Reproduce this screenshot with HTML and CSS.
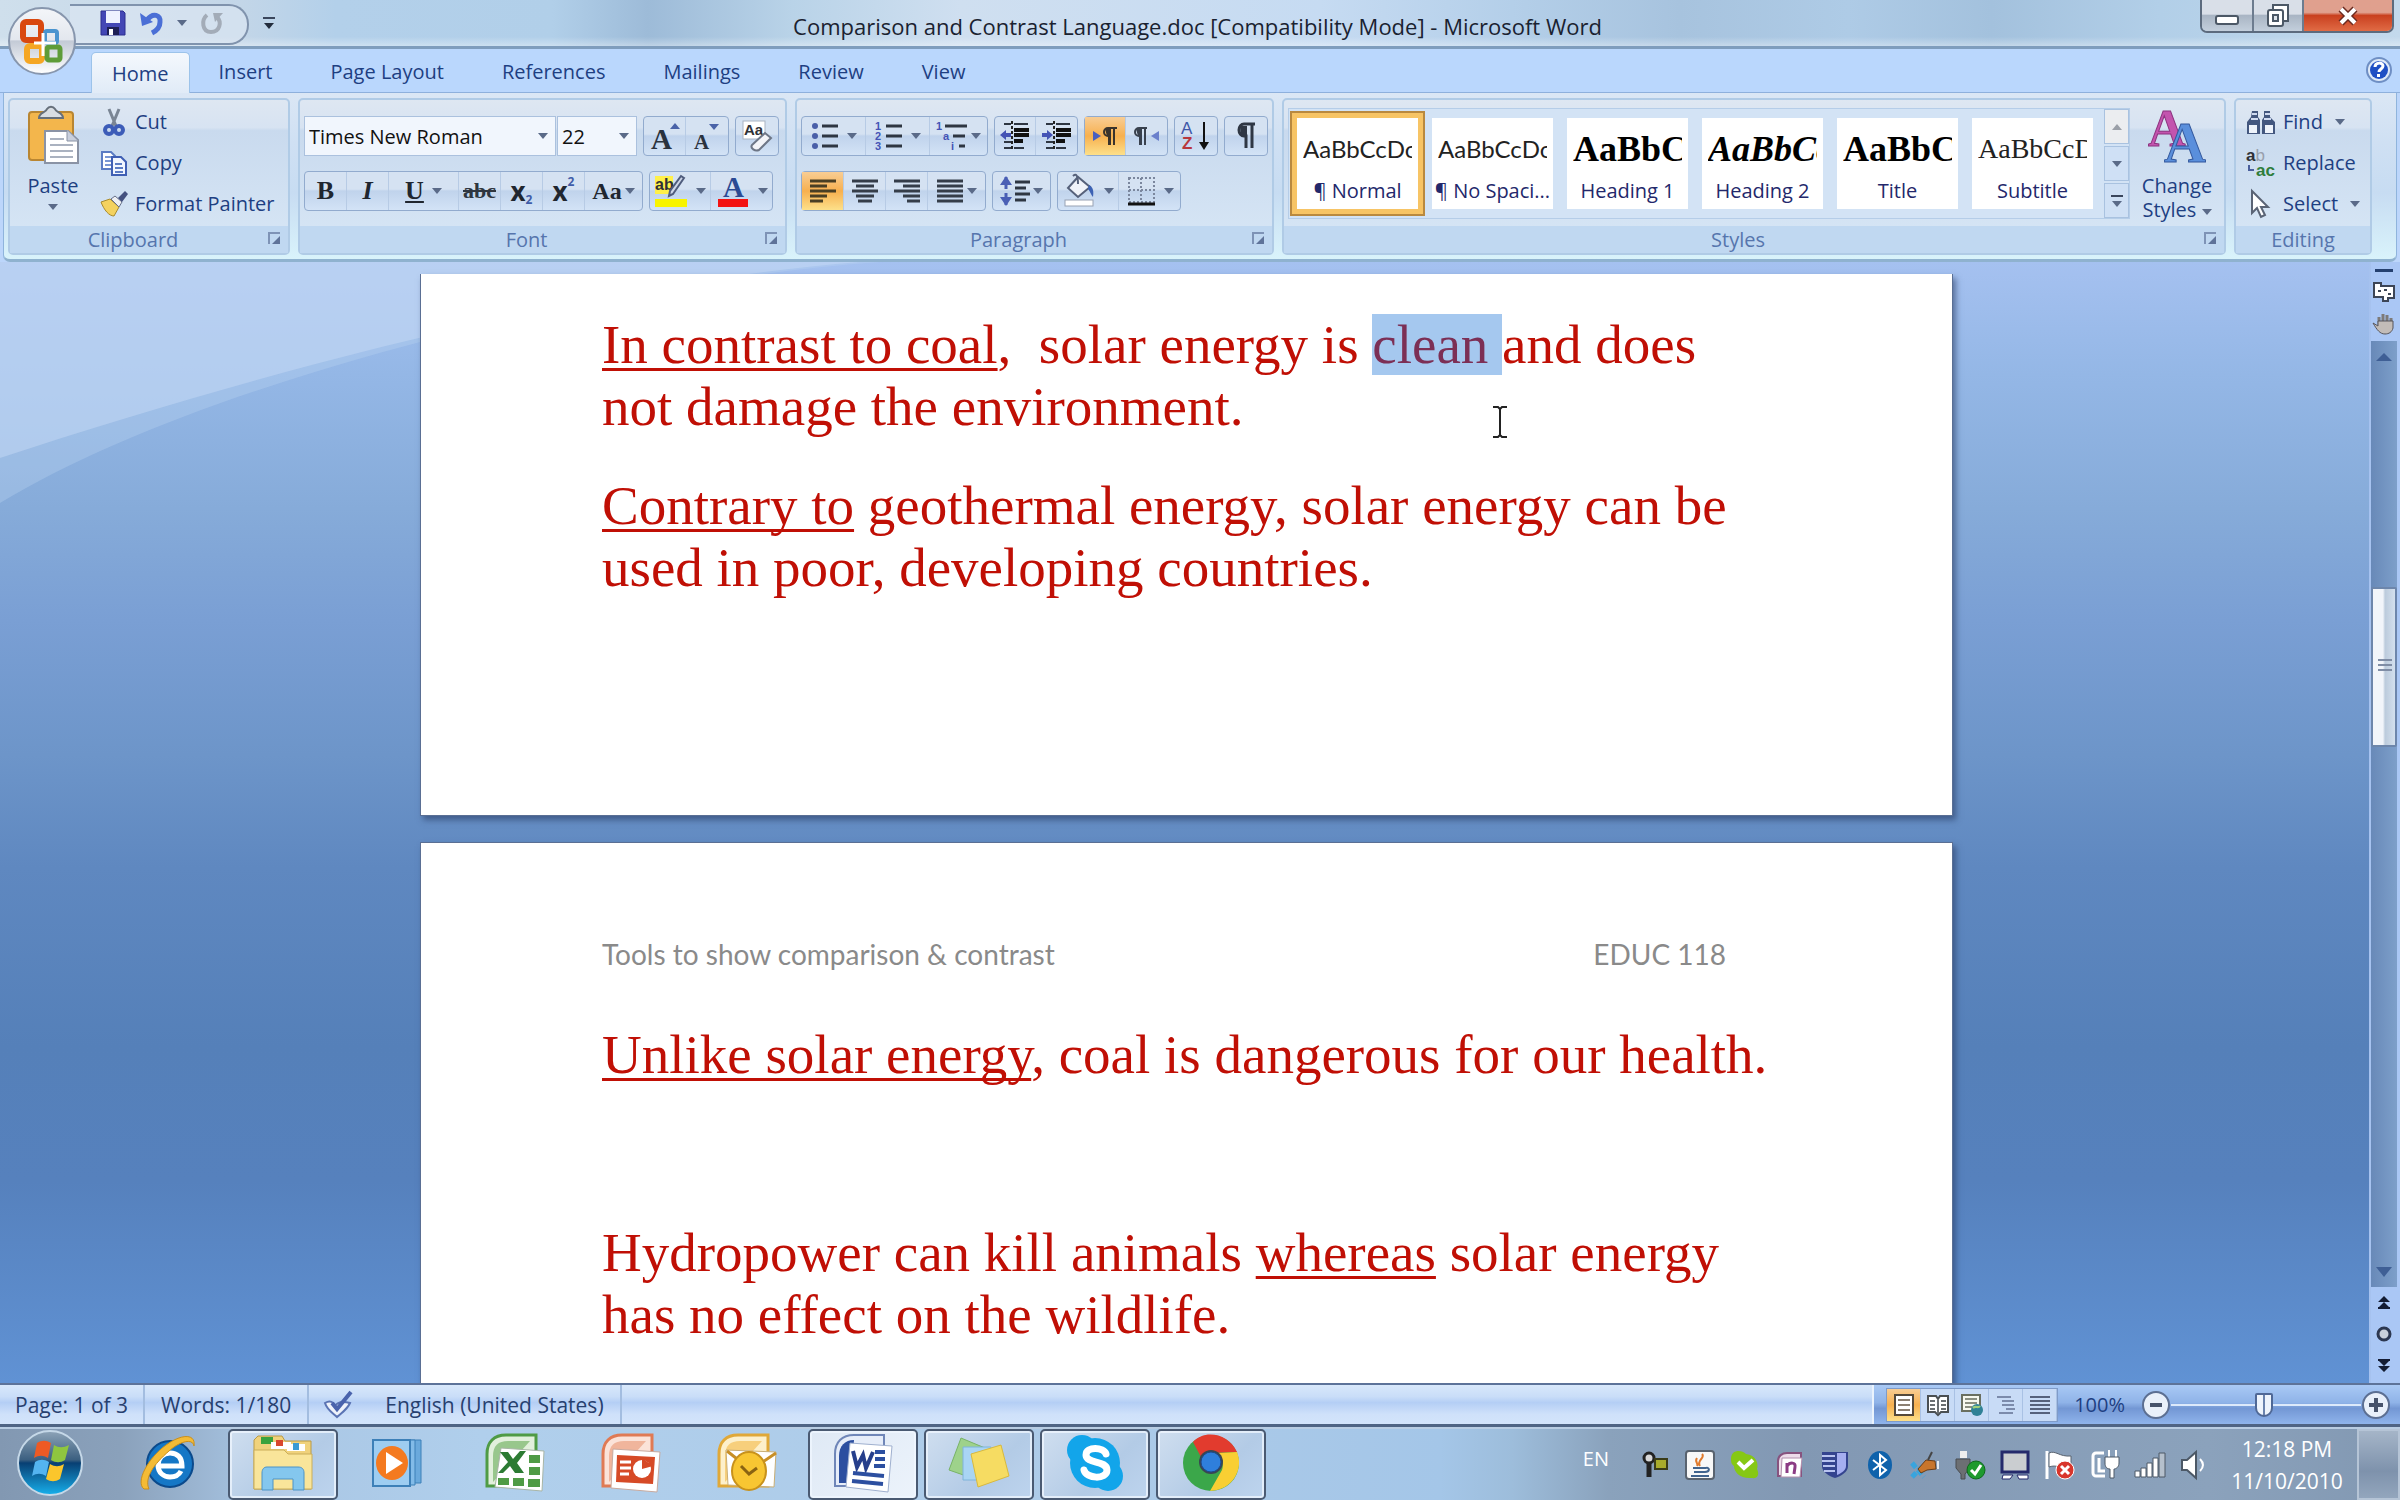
FILE: index.html
```
<!DOCTYPE html>
<html lang="en">
<head>
  <meta charset="UTF-8">
  <meta name="viewport" content="width=device-width, initial-scale=1.0">
  <title>Comparison and Contrast Language.doc [Compatibility Mode] - Microsoft Word</title>
  <link rel="stylesheet" href="styles.css">
</head>
<body>

  <!-- Title bar -->
  <header class="titlebar">
    <button class="office-btn" aria-label="Office Button">
      <svg width="70" height="70" viewBox="0 0 70 70">
        <defs>
          <linearGradient id="orb" x1="0" y1="0" x2="0" y2="1">
            <stop offset="0" stop-color="#f4f6f9"/><stop offset=".48" stop-color="#e3e7ee"/>
            <stop offset=".5" stop-color="#c3cad6"/><stop offset="1" stop-color="#ffffff"/>
          </linearGradient>
        </defs>
        <circle cx="35" cy="35" r="33" fill="url(#orb)" stroke="#8796ad" stroke-width="2"/>
        <g fill="none">
          <rect x="16" y="16" width="18" height="18" rx="3" stroke="#d9480f" stroke-width="6"/>
          <rect x="38" y="25" width="12" height="12" rx="2" stroke="#4a94cf" stroke-width="4"/>
          <rect x="20" y="40" width="15" height="15" rx="3" stroke="#f5a623" stroke-width="6"/>
          <rect x="40" y="41" width="13" height="13" rx="2" stroke="#5e9c38" stroke-width="5"/>
        </g>
        <path d="M27 37h22M36 27v23" stroke="#fff" stroke-width="3"/>
      </svg>
    </button>
    <div class="quick-access">
      <button aria-label="Save">
        <svg width="28" height="28" viewBox="0 0 28 28"><path d="M2 2h22l2 2v22H2z" fill="#4347b5" stroke="#2c2f8f"/><path d="M7 2h14v12H7z" fill="#eef2ff"/><path d="M8 18h12v8H8z" fill="#1d1f55"/><path d="M10 20h4v6h-4z" fill="#fff"/></svg>
      </button>
      <button aria-label="Undo">
        <svg width="26" height="26" viewBox="0 0 26 26"><path d="M8 10C14 2 22 5 21 12c0 6-4 9-8 11" fill="none" stroke="#4b6fd6" stroke-width="5"/><path d="M1 3l2 13 11-4z" fill="#4b6fd6"/></svg>
      </button>
      <span class="caret"></span>
      <button aria-label="Redo">
        <svg width="26" height="26" viewBox="0 0 26 26"><path d="M8 5C2 10 3 22 12 22s11-10 6-15" fill="none" stroke="#a3acb8" stroke-width="4"/><path d="M14 3h10l-8 9z" fill="#a3acb8"/></svg>
      </button>
    </div>
    <button class="customize-btn" aria-label="Customize Quick Access Toolbar"><span class="bar"></span><span class="caret dark"></span></button>
    <h1 class="window-title">Comparison and Contrast Language.doc [Compatibility Mode] - Microsoft Word</h1>
    <div class="window-buttons">
      <button class="minimize" aria-label="Minimize"><svg width="26" height="12" viewBox="0 0 26 12"><rect x="2" y="2" width="22" height="8" rx="2" fill="#fff" stroke="#4c5866" stroke-width="2"/></svg></button>
      <button class="restore" aria-label="Restore Down"><svg width="26" height="26" viewBox="0 0 26 26"><path d="M8 6V2h15v16h-4" fill="#fff" stroke="#4c5866" stroke-width="2"/><rect x="3" y="7" width="15" height="16" rx="2" fill="#fff" stroke="#4c5866" stroke-width="2"/><rect x="8" y="12" width="5" height="6" fill="#dde3ea" stroke="#4c5866" stroke-width="2"/></svg></button>
      <button class="close" aria-label="Close"><svg width="22" height="20" viewBox="0 0 22 20"><path d="M4 3l14 14M18 3L4 17" stroke="#6b2a20" stroke-width="7"/><path d="M4 3l14 14M18 3L4 17" stroke="#fff" stroke-width="4"/></svg></button>
    </div>
  </header>

  <!-- Ribbon tabs -->
  <nav class="tabs">
    <button class="tab active">Home</button>
    <button class="tab">Insert</button>
    <button class="tab">Page Layout</button>
    <button class="tab">References</button>
    <button class="tab">Mailings</button>
    <button class="tab">Review</button>
    <button class="tab">View</button>
    <button class="help-btn" aria-label="Help"><svg width="28" height="28" viewBox="0 0 28 28"><circle cx="14" cy="14" r="12" fill="#dfeaf8" stroke="#6f8fc4" stroke-width="2"/><circle cx="14" cy="14" r="9" fill="#1f4fc4"/><path d="M10 11c0-5 8-5 8-1 0 3-4 3-4 6" fill="none" stroke="#fff" stroke-width="3"/><rect x="12" y="18" width="3" height="3" fill="#fff"/></svg></button>
  </nav>

  <!-- Ribbon -->
  <div class="ribbon">
    <section class="group clipboard">
      <div class="group-body">
        <button class="big-btn paste">
          <svg width="52" height="58" viewBox="0 0 52 58"><rect x="2" y="6" width="44" height="48" rx="3" fill="#f3b64c" stroke="#b98632" stroke-width="2"/><path d="M12 12c0-6 7-5 8-9 2-3 6-3 8 0 1 4 8 3 8 9z" fill="#d8dde3" stroke="#666f7a" stroke-width="2"/><path d="M18 25h23l10 9v23H18z" fill="#fff" stroke="#8a93a5" stroke-width="2"/><path d="M40 24v11h11" fill="#c8cfdd" stroke="#8a93a5"/><path d="M23 33h14M23 39h23M23 45h23M23 51h23" stroke="#aab2c0" stroke-width="2"/></svg>
          <span>Paste</span>
          <span class="caret"></span>
        </button>
        <div class="stack">
          <button><svg width="28" height="28" viewBox="0 0 28 28"><path d="M9 1l7 17M19 1l-7 17" stroke="#7a8594" stroke-width="3"/><circle cx="9" cy="22" r="4" fill="none" stroke="#3c5cb8" stroke-width="4"/><circle cx="19" cy="22" r="4" fill="none" stroke="#3c5cb8" stroke-width="4"/></svg>Cut</button>
          <button><svg width="28" height="28" viewBox="0 0 28 28"><path d="M2 3h9l4 4v13H2z" fill="#fff" stroke="#5b7cc4" stroke-width="2"/><path d="M5 8h6M5 12h6M5 16h6" stroke="#7a97d4" stroke-width="2"/><path d="M12 8h9l5 5v13H12z" fill="#f2f6ff" stroke="#3f5fb4" stroke-width="2"/><path d="M15 15h7M15 19h8M15 23h8" stroke="#5b7cc4" stroke-width="2"/></svg>Copy</button>
          <button><svg width="28" height="28" viewBox="0 0 28 28"><path d="M1 12l9-3 9 8-5 9c-5 0-10-6-13-14z" fill="#f4d25f" stroke="#a88a2c"/><path d="M11 9l4-3 7 6-3 5z" fill="#eef0f4" stroke="#67708a"/><path d="M18 8l7-7 3 3-6 8z" fill="#44517f"/></svg>Format Painter</button>
        </div>
      </div>
      <footer class="caption">Clipboard<i class="launcher"></i></footer>
    </section>

    <section class="group font">
      <div class="group-body rows">
        <div class="row">
          <div class="combos">
            <label class="combo"><select class="font-name" aria-label="Font"><option>Times New Roman</option></select><span class="caret"></span></label>
            <label class="combo"><select class="font-size" aria-label="Font Size"><option>22</option></select><span class="caret"></span></label>
          </div>
          <div class="tools">
            <button class="w42" aria-label="Grow Font"><svg width="32" height="30" viewBox="0 0 32 30"><text x="2" y="28" class="glyph-serif" font-size="29">A</text><path d="M21 8l5-6 5 6z" fill="#4a63a8"/></svg></button>
            <button class="w42" aria-label="Shrink Font"><svg width="32" height="30" viewBox="0 0 32 30"><text x="3" y="28" class="glyph-serif" font-size="21">A</text><path d="M18 3h10l-5 6z" fill="#4a63a8"/></svg></button>
          </div>
          <div class="tools">
            <button class="w42" aria-label="Clear Formatting"><svg width="34" height="34" viewBox="0 0 34 34"><rect x="3" y="2" width="22" height="18" fill="#fff" stroke="#a9b3c2"/><text x="4" y="16" class="glyph-sans" font-size="15">Aa</text><path d="M12 26l13-12 6 5-12 12c-4 2-9-2-7-5z" fill="#f3f4f8" stroke="#6d7686" stroke-width="2"/></svg></button>
          </div>
        </div>
        <div class="row">
          <div class="tools">
            <button class="w42 bold">B</button>
            <button class="w42 italic">I</button>
            <button class="w70 underline"><u>U</u><span class="caret"></span></button>
            <button class="w42 strike"><s>abc</s></button>
            <button class="w42 script">x<sub>2</sub></button>
            <button class="w42 script">x<sup>2</sup></button>
            <button class="w56 case">Aa<span class="caret"></span></button>
          </div>
          <div class="tools">
            <button class="w60" aria-label="Text Highlight Color"><svg width="34" height="34" viewBox="0 0 34 34"><rect x="1" y="2" width="18" height="18" fill="#fff04a"/><text x="1" y="16" class="glyph-sans" font-size="16">ab</text><path d="M30 4l-11 16-4 2 1-5L27 2z" fill="#cdd6e8" stroke="#4f5c7c" stroke-width="2"/><rect x="1" y="25" width="32" height="8" fill="#f8f400"/></svg><span class="caret"></span></button>
            <button class="w60" aria-label="Font Color"><svg width="34" height="34" viewBox="0 0 34 34"><text x="7" y="23" font-family="Liberation Serif" font-weight="bold" font-size="29" fill="#2b4a93">A</text><rect x="2" y="25" width="30" height="8" fill="#f31212"/></svg><span class="caret"></span></button>
          </div>
        </div>
      </div>
      <footer class="caption">Font<i class="launcher"></i></footer>
    </section>

    <section class="group paragraph">
      <div class="group-body rows">
        <div class="row">
          <div class="tools">
            <button class="w62" aria-label="Bullets"><svg width="28" height="28" viewBox="0 0 28 28"><g fill="#4a5fa8"><circle cx="4" cy="4" r="3"/><circle cx="4" cy="14" r="3"/><circle cx="4" cy="24" r="3"/></g><path d="M11 4h16M11 14h16M11 24h16" stroke="#2e3642" stroke-width="3"/></svg><span class="caret"></span></button>
            <button class="w62" aria-label="Numbering"><svg width="28" height="30" viewBox="0 0 28 30"><g font-family="Liberation Sans" font-size="11" font-weight="bold" fill="#4453b5"><text x="0" y="9">1</text><text x="0" y="19">2</text><text x="0" y="29">3</text></g><path d="M11 5h16M11 15h16M11 25h16" stroke="#2e3642" stroke-width="3"/></svg><span class="caret"></span></button>
            <button class="w56" aria-label="Multilevel List"><svg width="32" height="30" viewBox="0 0 32 30"><g font-family="Liberation Sans" font-size="11" font-weight="bold" fill="#4453b5"><text x="0" y="9">1</text><text x="7" y="19">a</text><text x="15" y="29">i</text></g><path d="M9 5h22M17 15h12M23 25h6" stroke="#2e3642" stroke-width="3"/></svg><span class="caret"></span></button>
          </div>
          <div class="tools">
            <button class="w40" aria-label="Decrease Indent"><svg width="30" height="30" viewBox="0 0 30 30"><path d="M4 3h7M4 21h7M4 27h7M14 3h14M14 27h10" stroke="#2e3642" stroke-width="2"/><path d="M14 9h15M14 14h15M14 20h9" stroke="#111" stroke-width="4"/><path d="M12 0v30" stroke="#222" stroke-dasharray="3 2" stroke-width="2"/><path d="M0 14l6-5v3h5v4H6v3z" fill="#4453b5"/></svg></button>
            <button class="w40" aria-label="Increase Indent"><svg width="30" height="30" viewBox="0 0 30 30"><path d="M4 3h7M4 21h7M4 27h7M14 3h14M14 27h10" stroke="#2e3642" stroke-width="2"/><path d="M14 9h15M14 14h15M14 20h9" stroke="#111" stroke-width="4"/><path d="M12 0v30" stroke="#222" stroke-dasharray="3 2" stroke-width="2"/><path d="M11 14L5 9v3H0v4h5v3z" fill="#4453b5"/></svg></button>
          </div>
          <div class="tools">
            <button class="w40 on" aria-label="Left-to-Right"><svg width="26" height="22" viewBox="0 0 26 22"><path d="M1 6l8 5-8 5z" fill="#4a5fc0"/><path d="M25 3H16a4 4 0 0 0 0 8h1v9M22 3v17M18 3v17" fill="none" stroke="#3a332c" stroke-width="2"/><path d="M13 4h6v7h-4z" fill="#3a332c"/></svg></button>
            <button class="w40" aria-label="Right-to-Left"><svg width="26" height="22" viewBox="0 0 26 22"><path d="M25 6l-8 5 8 5z" fill="#6b80cc"/><path d="M13 3H5a4 4 0 0 0 0 8h1v9M11 3v17M7 3v17" fill="none" stroke="#39414e" stroke-width="2"/><path d="M2 4h6v7H4z" fill="#39414e"/></svg></button>
          </div>
          <div class="tools">
            <button class="w42" aria-label="Sort"><svg width="30" height="32" viewBox="0 0 30 32"><text x="0" y="14" font-family="Liberation Sans" font-size="17" fill="#3f57a8">A</text><text x="1" y="29" font-family="Liberation Sans" font-size="17" font-weight="bold" fill="#b8383d">Z</text><path d="M23 2v22" stroke="#111" stroke-width="2"/><path d="M18 22h10l-5 8z" fill="#111"/></svg></button>
          </div>
          <div class="tools">
            <button class="w42" aria-label="Show/Hide"><svg width="22" height="28" viewBox="0 0 22 28"><path d="M20 2H9a5 6 0 0 0 0 12h2v12M17 2v24" fill="none" stroke="#2f3744" stroke-width="3"/><path d="M5 4h7v10H6z" fill="#2f3744"/></svg></button>
          </div>
        </div>
        <div class="row">
          <div class="tools">
            <button class="w42 on" aria-label="Align Left"><svg width="28" height="26" viewBox="0 0 28 26"><path d="M1 3h26M1 8h17M1 13h26M1 18h17M1 23h13" stroke="#4a3f24" stroke-width="3"/></svg></button>
            <button class="w42" aria-label="Center"><svg width="28" height="26" viewBox="0 0 28 26"><path d="M1 3h26M5 8h18M1 13h26M5 18h18M7 23h14" stroke="#353d49" stroke-width="3"/></svg></button>
            <button class="w42" aria-label="Align Right"><svg width="28" height="26" viewBox="0 0 28 26"><path d="M1 3h26M10 8h17M1 13h26M10 18h17M14 23h13" stroke="#353d49" stroke-width="3"/></svg></button>
            <button class="w56" aria-label="Justify"><svg width="28" height="26" viewBox="0 0 28 26"><path d="M1 3h26M1 8h26M1 13h26M1 18h26M1 23h26" stroke="#353d49" stroke-width="3"/></svg><span class="caret"></span></button>
          </div>
          <div class="tools">
            <button class="w56" aria-label="Line Spacing"><svg width="30" height="32" viewBox="0 0 30 32"><path d="M6 2v28" stroke="#4a5fb5" stroke-width="3" stroke-dasharray="12 4"/><path d="M0 10l6-9 6 9zM0 22l6 9 6-9z" fill="#4a5fb5"/><path d="M15 7h15M15 13h11M15 19h15M15 25h11" stroke="#2e3642" stroke-width="3"/></svg><span class="caret"></span></button>
          </div>
          <div class="tools">
            <button class="w60" aria-label="Shading"><svg width="34" height="34" viewBox="0 0 34 34"><path d="M6 14L16 3l12 10-12 10z" fill="#f0f3f9" stroke="#56617a" stroke-width="2"/><path d="M11 2c3-3 5-1 5 8" fill="none" stroke="#56617a" stroke-width="2"/><path d="M27 11c4 2 5 6 4 12-2-2-3-6-5-8z" fill="#3c62b4"/><rect x="3" y="26" width="28" height="6" fill="#fff" stroke="#98a2b3"/></svg><span class="caret"></span></button>
            <button class="w60" aria-label="Borders"><svg width="30" height="32" viewBox="0 0 30 32"><path d="M3 3h25v24H3zM15 3v24M3 15h25" fill="none" stroke="#7b879e" stroke-width="2" stroke-dasharray="2 2"/><path d="M2 29h27" stroke="#111" stroke-width="3"/></svg><span class="caret"></span></button>
          </div>
        </div>
      </div>
      <footer class="caption">Paragraph<i class="launcher"></i></footer>
    </section>

    <section class="group styles">
      <div class="group-body">
        <div class="gallery">
          <div class="cards">
            <button class="card selected"><span class="sample">AaBbCcDc</span><span class="name">¶ Normal</span></button>
            <button class="card"><span class="sample">AaBbCcDc</span><span class="name">¶ No Spaci...</span></button>
            <button class="card"><span class="sample heading">AaBbC</span><span class="name">Heading 1</span></button>
            <button class="card"><span class="sample heading slanted">AaBbCc</span><span class="name">Heading 2</span></button>
            <button class="card"><span class="sample heading">AaBbC</span><span class="name">Title</span></button>
            <button class="card"><span class="sample subtitle">AaBbCcD</span><span class="name">Subtitle</span></button>
          </div>
          <div class="gallery-scroll">
            <button class="off" aria-label="Row up"><span class="caret up"></span></button>
            <button aria-label="Row down"><span class="caret"></span></button>
            <button aria-label="More"><span class="bar"></span><span class="caret"></span></button>
          </div>
        </div>
        <button class="big-btn change-styles">
          <svg width="58" height="56" viewBox="0 0 58 56"><text x="0" y="38" font-family="Liberation Serif" font-weight="bold" font-size="52" fill="#c354ae" stroke="#8d3480">A</text><text x="16" y="54" font-family="Liberation Serif" font-weight="bold" font-size="58" fill="#5a8fdc" stroke="#34599e">A</text></svg>
          <span>Change</span>
          <span>Styles <span class="caret"></span></span>
        </button>
      </div>
      <footer class="caption">Styles<i class="launcher"></i></footer>
    </section>

    <section class="group editing">
      <div class="group-body">
        <div class="stack">
          <button><svg width="30" height="28" viewBox="0 0 30 28"><path d="M6 3h6v6l2 3v14H1V14l4-5zM18 3h6v6l5 5v12H16V12l2-3z" fill="#43577f"/><path d="M3 17h8v8H3zM19 17h8v8h-8z" fill="#eef3fb"/><path d="M6 6h5M19 6h5M5 11h7M18 11h7" stroke="#cfdaf0" stroke-width="2"/></svg>Find <span class="caret"></span></button>
          <button><svg width="30" height="28" viewBox="0 0 30 28"><text x="0" y="12" class="glyph-sans" font-size="17">a<tspan font-weight="normal" fill="#98a0ad">b</tspan></text><path d="M3 16v5h5" fill="none" stroke="#4a5f9c" stroke-width="2"/><text x="10" y="27" font-family="Liberation Sans" font-weight="bold" font-size="17" fill="#2f7d3c">ac</text></svg>Replace</button>
          <button><svg width="30" height="28" viewBox="0 0 30 28"><path d="M6 1v22l5-5 4 9 4-2-4-8h7z" fill="#fff" stroke="#5a6475" stroke-width="2"/></svg>Select <span class="caret"></span></button>
        </div>
      </div>
      <footer class="caption">Editing</footer>
    </section>
  </div>

  <!-- Document area -->
  <main class="workspace">
    <svg class="swoosh" width="900" height="250" viewBox="0 0 900 250">
      <path d="M0 0h880C600 20 200 120 0 241z" fill="#b9d3f2" opacity=".35"/>
      <path d="M0 0h860C600 20 260 110 0 196z" fill="#c5daf5" opacity=".5"/>
    </svg>
    <div class="pages">
      <article class="page first">
        <p><u>In contrast to coal</u>,&nbsp; solar energy is <mark>clean </mark>and does<br>not damage the environment.</p>
        <p><u>Contrary to</u> geothermal energy, solar energy can be<br>used in poor, developing countries.</p>
        <svg class="ibeam" width="16" height="32" viewBox="0 0 16 32"><path d="M1 1h5l2 2 2-2h5M8 3v26M1 31h5l2-2 2 2h5" fill="none" stroke="#222" stroke-width="2"/></svg>
      </article>
      <article class="page">
        <div class="page-header"><span>Tools to show comparison &amp; contrast</span><span>EDUC 118</span></div>
        <p><u>Unlike solar energy</u>, coal is dangerous for our health.</p>
        <p>&nbsp;</p>
        <p>Hydropower can kill animals <u>whereas</u> solar energy<br>has no effect on the wildlife.</p>
      </article>
    </div>
    <aside class="scrollbar">
      <span class="split"></span>
      <button class="ruler" aria-label="View Ruler"><svg width="24" height="22" viewBox="0 0 24 22"><path d="M2 2h7v3h13v12h-6v3h-5v-4H2z" fill="#fff" stroke="#3c4556" stroke-width="2"/><path d="M6 10h3M12 9h3M16 13h3" stroke="#3c4556" stroke-width="2"/></svg></button>
      <button class="hand" aria-label="Pan"><svg width="24" height="24" viewBox="0 0 24 24"><path d="M7 13V5M11 12V2M15 12V3M19 13V6" stroke="#7d7a78" stroke-width="3"/><path d="M1 11l5 3V9h15v7c-1 4-4 6-8 6-5 0-8-4-12-11z" fill="#c2bcb8" stroke="#55555c"/></svg></button>
      <div class="track">
        <span class="caret up wide"></span>
        <div class="thumb"></div>
        <span class="caret wide"></span>
      </div>
      <button class="browse" aria-label="Previous Page"><svg width="14" height="14" viewBox="0 0 14 14"><path d="M7 0l6 6H1zM7 6l6 6H1z" fill="#131c33"/><path d="M1 12h12" stroke="#131c33" stroke-width="2"/></svg></button>
      <button class="browse" aria-label="Select Browse Object"><svg width="16" height="16" viewBox="0 0 16 16"><circle cx="8" cy="8" r="6" fill="#c9d0da" stroke="#2c3750" stroke-width="3"/></svg></button>
      <button class="browse" aria-label="Next Page"><svg width="14" height="14" viewBox="0 0 14 14"><path d="M7 14L1 8h12zM7 8L1 2h12z" fill="#131c33"/><path d="M1 2h12" stroke="#131c33" stroke-width="2"/></svg></button>
    </aside>
  </main>

  <!-- Status bar -->
  <div class="statusbar">
    <button class="status-item">Page: 1 of 3</button>
    <button class="status-item">Words: 1/180</button>
    <button class="status-item proof" aria-label="Proofing"><svg width="32" height="30" viewBox="0 0 32 30"><path d="M2 13c5-3 9-1 10 3 3-5 8-5 15-3-3 7-9 10-13 14-4-4-10-7-12-14z" fill="#eef2fa" stroke="#5b74b4" stroke-width="2"/><path d="M9 13l5 6L28 2" fill="none" stroke="#4a63ac" stroke-width="4"/></svg></button>
    <button class="status-item language">English (United States)</button>
    <div class="status-right">
      <div class="views">
        <button class="on" aria-label="Print Layout"><svg width="24" height="24" viewBox="0 0 24 24"><rect x="3" y="2" width="18" height="20" fill="#fff" stroke="#55493a" stroke-width="2"/><path d="M6 7h12M6 12h12M6 17h12" stroke="#8b7f72" stroke-width="2"/></svg></button>
        <button aria-label="Full Screen Reading"><svg width="24" height="24" viewBox="0 0 24 24"><path d="M2 3h8l2 3 2-3h8v16h-7l-3 3-3-3H2z" fill="#fff" stroke="#4a4f52" stroke-width="2"/><path d="M12 6v14M4 8h5M4 12h5M4 16h5M15 8h5M15 12h5M15 16h5" stroke="#6a6f72" stroke-width="2"/></svg></button>
        <button aria-label="Web Layout"><svg width="24" height="24" viewBox="0 0 24 24"><rect x="2" y="2" width="18" height="16" fill="#f7f8ee" stroke="#6a6f60" stroke-width="2"/><path d="M5 6h12M5 10h12M5 14h7" stroke="#8b8f80" stroke-width="2"/><circle cx="17" cy="17" r="6" fill="#2f8196"/><path d="M13 15c3-3 5 1 7-2" stroke="#9fd07c" stroke-width="2" fill="none"/></svg></button>
        <button aria-label="Outline"><svg width="24" height="24" viewBox="0 0 24 24"><path d="M3 4h14M8 8h12M8 12h12M12 16h9M5 20h14" stroke="#7c8bab" stroke-width="2"/></svg></button>
        <button aria-label="Draft"><svg width="24" height="24" viewBox="0 0 24 24"><path d="M2 4h20M2 8h20M2 12h20M2 16h20M2 20h20" stroke="#56627c" stroke-width="2"/></svg></button>
      </div>
      <button class="zoom-level">100%</button>
      <button class="zoom-btn" aria-label="Zoom Out"><svg width="30" height="30" viewBox="0 0 30 30"><circle cx="15" cy="15" r="13" fill="#e9f0fa" stroke="#5c6f92" stroke-width="2"/><path d="M9 15h12" stroke="#47536b" stroke-width="4"/></svg></button>
      <input class="zoom-slider" type="range" min="0" max="100" value="49" aria-label="Zoom">
      <button class="zoom-btn" aria-label="Zoom In"><svg width="30" height="30" viewBox="0 0 30 30"><circle cx="15" cy="15" r="13" fill="#e9f0fa" stroke="#5c6f92" stroke-width="2"/><path d="M8 15h14M15 8v14" stroke="#47536b" stroke-width="4"/></svg></button>
    </div>
  </div>

  <!-- Windows taskbar -->
  <footer class="taskbar">
    <button class="start" aria-label="Start">
      <svg width="70" height="68" viewBox="0 0 70 68">
        <defs>
          <linearGradient id="start" x1="0" y1="0" x2="0" y2="1"><stop offset="0" stop-color="#8ea4b8"/><stop offset=".45" stop-color="#3b5f80"/><stop offset=".5" stop-color="#083f73"/><stop offset="1" stop-color="#17b0ec"/></linearGradient>
        </defs>
        <circle cx="35" cy="34" r="32" fill="url(#start)" stroke="#c5d8e8" stroke-width="2"/>
        <path d="M22 14c5-3 9-3 14 0l-3 15c-5-3-9-3-14 0z" fill="#ee5a24"/>
        <path d="M39 16c5 3 9 3 15 0l-4 15c-5 3-9 3-14 0z" fill="#8fc63f"/>
        <path d="M20 33c5-3 9-3 14 0l-3 14c-5-3-9-3-14 0z" fill="#54b4f0"/>
        <path d="M35 35c5 3 9 3 14 0l-4 15c-5 3-9 3-14 0z" fill="#fbc62c"/>
      </svg>
    </button>
    <div class="apps">
      <button class="app" aria-label="Internet Explorer"><svg width="62" height="62" viewBox="0 0 62 62"><circle cx="34" cy="32" r="23" fill="#1577c6" stroke="#0b4a8c" stroke-width="2"/><path d="M22 34h24c0-9-5-13-12-13s-12 5-12 12c0 8 6 12 12 12 6 0 9-2 11-6" fill="none" stroke="#fff" stroke-width="5"/><path d="M8 57C-1 50 12 26 30 13 45 2 60 1 58 14c-1-8-14-5-25 5C18 32 8 46 13 57z" fill="#f4bb35" stroke="#c98f1c"/></svg></button>
      <button class="app open" aria-label="Windows Explorer"><svg width="64" height="62" viewBox="0 0 64 62"><path d="M3 8l4-4h24l3 5h26v48H3z" fill="#f0d27c" stroke="#b99a46"/><path d="M10 5h12v7H10z" fill="#3aa23d"/><path d="M20 10h20v7H20z" fill="#fff"/><path d="M25 8h7v6h-7z" fill="#d9472e"/><path d="M36 12h18v7H36z" fill="#fff"/><path d="M42 11h6v7h-6z" fill="#3b9bd3"/><path d="M3 18h30l4 4h24v35H3z" fill="#f9e59a" stroke="#cbae58"/><path d="M11 58V41c0-4 2-6 5-6h31c4 0 6 2 6 6v17H42V47H22v11z" fill="#84c7ee" stroke="#4d93c6"/></svg></button>
      <button class="app" aria-label="Windows Media Player"><svg width="56" height="56" viewBox="0 0 56 56"><path d="M14 5h36v43H14z" fill="#6aa9dc" stroke="#3d80b8"/><path d="M8 5h36v45H8z" fill="#82bbe8" stroke="#3d80b8"/><path d="M2 5h37v46H2z" fill="#9ecdf1" stroke="#3d80b8" stroke-width="2"/><ellipse cx="21" cy="28" rx="16" ry="17" fill="#f47a20"/><path d="M15 17l17 11-17 11z" fill="#fff"/></svg></button>
      <button class="app" aria-label="Excel"><svg width="62" height="62" viewBox="0 0 62 62"><path d="M3 54V22C3 10 10 3 22 3h30v51z" fill="#e2f0dc" stroke="#4f9b45" stroke-width="3"/><path d="M9 50V24C9 14 14 9 24 9h22z" fill="#98c78c"/><path d="M17 16l43 3-2 40-47-4z" fill="#fff" stroke="#a8b5a6"/><path d="M16 20h8l5 7 7-8h6L33 31l7 10h-9l-5-7-7 7h-5l10-11z" fill="#2c7b33"/><path d="M45 23h11v8H45zM45 35h11v8H45zM14 46h11v7H14zM29 46h11v8H29zM44 47h12v8H44z" fill="#4f9b45"/></svg></button>
      <button class="app" aria-label="PowerPoint"><svg width="62" height="62" viewBox="0 0 62 62"><path d="M3 54V22C3 10 10 3 22 3h30v51z" fill="#fbe3d9" stroke="#e07a54" stroke-width="3"/><path d="M9 50V24C9 14 14 9 24 9h22z" fill="#f0b59c"/><path d="M13 17l47 3-3 40-46-4z" fill="#fff" stroke="#c8aa9f"/><path d="M17 23l38 2-2 27-37-2z" fill="#d64a26"/><path d="M20 30h11M20 36h11M20 42h9" stroke="#fff" stroke-width="3"/><circle cx="42" cy="37" r="9" fill="#fff"/><path d="M42 37V26l11 8z" fill="#d64a26"/></svg></button>
      <button class="app" aria-label="Outlook"><svg width="62" height="62" viewBox="0 0 62 62"><path d="M3 54V22C3 10 10 3 22 3h30v51z" fill="#fdf0cb" stroke="#e0a838" stroke-width="3"/><path d="M9 50V24C9 14 14 9 24 9h22z" fill="#f7cf7c"/><path d="M10 18l50 2-2 35-46-2z" fill="#fff" stroke="#c9ae75"/><path d="M11 19l24 19 25-17" fill="none" stroke="#c88f26" stroke-width="3"/><ellipse cx="33" cy="39" rx="17" ry="19" fill="#f8c632" stroke="#c8921c" stroke-width="2"/><path d="M25 34l8 8 8-6" fill="none" stroke="#8a6312" stroke-width="3"/></svg></button>
      <button class="app open current" aria-label="Word"><svg width="62" height="62" viewBox="0 0 62 62"><path d="M3 54V22C3 10 10 3 22 3h30v51z" fill="#e6edf9" stroke="#6f86b8" stroke-width="2"/><path d="M7 51V24C7 14 13 8 22 8l-4 43z" fill="#2c4fa0"/><path d="M18 11l42 3-4 46-42-5z" fill="#fff" stroke="#9fb0cf"/><path d="M21 19l4 16 6-12 3 13 7-16" fill="none" stroke="#263f8c" stroke-width="4"/><path d="M43 20h10M43 27h10M42 34h11M21 41l31 3M20 49l31 3" stroke="#2c4fa0" stroke-width="4"/></svg></button>
      <button class="app open" aria-label="Sticky Notes"><svg width="64" height="56" viewBox="0 0 64 56"><path d="M14 3l24 10-13 30L2 35z" fill="#9ed28b" stroke="#78b367"/><path d="M16 12h28v33H16z" fill="#a9d5f4" stroke="#7fb4da"/><path d="M24 19l30-9 8 31-31 11z" fill="#f6dc62" stroke="#d8b93e"/></svg></button>
      <button class="app open" aria-label="Skype"><svg width="62" height="62" viewBox="0 0 62 62"><circle cx="18" cy="18" r="15" fill="#12a5ea"/><circle cx="44" cy="44" r="15" fill="#12a5ea"/><circle cx="31" cy="31" r="25" fill="#12a5ea"/><path d="M42 22c-2-7-20-8-20 1 0 9 21 5 21 15 0 10-21 9-23 0" fill="none" stroke="#fff" stroke-width="7" stroke-linecap="round"/></svg></button>
      <button class="app open" aria-label="Chrome"><svg width="62" height="62" viewBox="0 0 62 62"><circle cx="31" cy="31" r="28" fill="#3ba74a"/><path d="M13 10C24-3 49 1 57 20l-26 1c-4 0-8 3-9 6z" fill="#e23b2e"/><path d="M57 20c7 17-4 38-27 39l12-21c2-5 0-13-4-17z" fill="#f9cf33"/><circle cx="31" cy="30" r="12" fill="#3a4652"/><circle cx="31" cy="30" r="10" fill="#2f7fdc" stroke="#1d4a8c"/></svg></button>
    </div>
    <div class="tray">
      <span class="lang">EN</span>
      <ul class="tray-icons">
        <li><svg width="28" height="30" viewBox="0 0 28 30"><circle cx="8" cy="8" r="5" fill="#d8d8d8" stroke="#222" stroke-width="3"/><path d="M8 14v13" stroke="#222" stroke-width="5"/><rect x="14" y="9" width="12" height="10" fill="#a8ac2c" stroke="#3a3c18" stroke-width="2"/></svg></li>
        <li><svg width="30" height="30" viewBox="0 0 30 30"><rect x="1" y="1" width="28" height="28" rx="3" fill="#f8f8f8" stroke="#59636f" stroke-width="2"/><path d="M17 4c4 4-6 6-2 12M12 8c-3 4 2 5 0 8" stroke="#e07a2c" stroke-width="2" fill="none"/><path d="M8 18h13M9 22h11M6 26h18M21 18c4-1 4 4-1 4" stroke="#41648e" stroke-width="2" fill="none"/></svg></li>
        <li><svg width="30" height="30" viewBox="0 0 30 30"><path d="M1 8C2-1 12 0 16 4c10 1 13 10 11 15 3 6 0 10-5 9C10 29 4 22 4 16 1 14 1 11 1 8z" fill="#86c814"/><path d="M8 12l6 6 9-8" fill="none" stroke="#fff" stroke-width="4"/></svg></li>
        <li><svg width="28" height="28" viewBox="0 0 28 28"><path d="M2 25V10C2 5 6 2 11 2h14v23z" fill="#eddcea" stroke="#87537f" stroke-width="2"/><path d="M6 7h20l-2 19H5z" fill="#fff" stroke="#b390ae"/><path d="M11 22V12M11 15c3-4 9-4 8 1l-1 7" fill="none" stroke="#8c3c85" stroke-width="3"/></svg></li>
        <li><svg width="30" height="30" viewBox="0 0 30 30"><path d="M2 2h26v14c0 6-7 10-13 12C9 26 2 22 2 16z" fill="#34448f"/><path d="M17 3h9v13c0 4-4 7-9 9z" fill="#a5aef0"/><path d="M2 6h13M2 11h13M3 16h12M4 21h11" stroke="#b9c4f0" stroke-width="2"/></svg></li>
        <li><svg width="26" height="30" viewBox="0 0 26 30"><ellipse cx="13" cy="15" rx="12" ry="14" fill="#0f62ab"/><path d="M6 10l13 10-6 5V5l6 5L6 20" fill="none" stroke="#fff" stroke-width="2"/></svg></li>
        <li><svg width="30" height="28" viewBox="0 0 30 28"><path d="M2 12l12 14M2 26l13-13" stroke="#39a4dd" stroke-width="5" stroke-dasharray="6 3"/><path d="M8 18l8-9 9 1 1 8-9 1-6 3z" fill="#c8752b" stroke="#6b3d16"/><path d="M18 9l4-8" stroke="#444" stroke-width="2"/><path d="M28 10v8" stroke="#e3e8ee" stroke-width="2"/></svg></li>
        <li><svg width="32" height="30" viewBox="0 0 32 30"><path d="M6 1h7v7H6z" fill="#eee"/><path d="M2 9h14v9l-5 6v5H7v-5l-5-6z" fill="#6c6f73" stroke="#494c50"/><circle cx="22" cy="20" r="9" fill="#1e9a2e" stroke="#0d6a1a"/><path d="M17 20l4 4 6-9" fill="none" stroke="#fff" stroke-width="3"/></svg></li>
        <li><svg width="30" height="30" viewBox="0 0 30 30"><rect x="2" y="2" width="26" height="20" fill="#cacdd0" stroke="#252a6b" stroke-width="3"/><path d="M3 25h10l-3 4H2zM17 25h11v4h-9z" fill="#fff" stroke="#252a6b"/></svg></li>
        <li><svg width="32" height="32" viewBox="0 0 32 32"><path d="M3 2v28" stroke="#fff" stroke-width="3"/><path d="M5 4c7-3 10 4 22 3v13c-10 0-14-5-22-2z" fill="#fff" stroke="#59636f"/><circle cx="21" cy="21" r="9" fill="#d8362c" stroke="#fff"/><path d="M17 17l8 8M25 17l-8 8" stroke="#fff" stroke-width="3"/></svg></li>
        <li><svg width="30" height="32" viewBox="0 0 30 32"><path d="M14 4H6a3 3 0 0 0-3 3v17a3 3 0 0 0 3 3h9M9 9v13h6" fill="none" stroke="#fff" stroke-width="3"/><path d="M19 1v7M26 1v7" stroke="#fff" stroke-width="2"/><path d="M15 8h14v6c0 4-3 6-5 6v9h-4v-9c-3 0-5-2-5-6z" fill="#fff" stroke="#4c5866"/></svg></li>
        <li><svg width="32" height="28" viewBox="0 0 32 28"><g fill="#fff" stroke="#4c5866"><path d="M1 20h5v6H1zM7 17h5v9H7zM13 12h5v14h-5zM19 7h5v19h-5z"/><path d="M25 2h6v24h-6z" fill="#b5c0cc"/></g></svg></li>
        <li><svg width="30" height="30" viewBox="0 0 30 30"><path d="M2 10h5l9-8v26l-9-8H2z" fill="#fff" stroke="#4c5866" stroke-width="2"/><path d="M20 9c4 4 4 8 0 12" fill="none" stroke="#fff" stroke-width="2"/></svg></li>
      </ul>
      <time class="clock"><span>12:18 PM</span><span>11/10/2010</span></time>
      <button class="show-desktop" aria-label="Show desktop"></button>
    </div>
  </footer>

</body>
</html>
```
FILE: styles.css
```
* {
  box-sizing: border-box;
}

body {
  margin: 0;
  height: 100vh;
  display: flex;
  flex-direction: column;
  overflow: hidden;
  font-family: "Open Sans", "Noto Sans", sans-serif;
  font-size: 20px;
  color: #1e3f82;
  background: #bcd6fb;
}

button,
select {
  font: inherit;
  color: inherit;
  background: none;
  border: none;
  margin: 0;
  padding: 0;
}

svg {
  display: block;
  flex: none;
  overflow: visible;
}

.caret {
  display: inline-block;
  flex: none;
  border: 5px solid transparent;
  border-top: 6px solid #5a6a88;
  border-bottom: none;
}

.caret.up {
  border-top: none;
  border-bottom: 6px solid #9a9fa8;
}

.caret.dark {
  border-top-color: #222c3c;
}

.bar {
  width: 12px;
  height: 2px;
  background: #3a465c;
}

.glyph-serif {
  font-family: "Liberation Serif", serif;
  font-weight: bold;
  fill: #2a323e;
}

.glyph-sans {
  font-family: "Liberation Sans", sans-serif;
  font-weight: bold;
  fill: #2f3136;
}

/* Title bar */
.titlebar {
  position: relative;
  display: flex;
  align-items: flex-start;
  height: 49px;
  flex: none;
  border-bottom: 3px solid #7f9dbd;
  background: linear-gradient(to bottom, transparent 80%, rgba(255, 255, 255, 0.35)),
    linear-gradient(to right, #cfdfec 0, #c3d6e8 10%, #b3d0ea 14%, #b1cfe9 23%, #9dbbd8 27%, #b9d3e8 33%, #cfdff0 40%, #c6dbf2 55%, #b4cfe9 63%, #a7c3de 70%, #aecbe6 77%, #a3c1dd 83%, #b2cfe8 90%, #c3d9ec 100%);
}

.office-btn {
  position: relative;
  z-index: 2;
  margin: 6px 0 0 7px;
}

.quick-access {
  display: flex;
  align-items: center;
  gap: 12px;
  height: 41px;
  margin: 4px 0 0 -7px;
  padding: 0 22px 4px 29px;
  border: 2px solid #8093ad;
  border-left: none;
  border-radius: 0 20px 20px 0;
  background: rgba(222, 232, 243, 0.6);
}

.customize-btn {
  display: flex;
  flex-direction: column;
  align-items: center;
  gap: 4px;
  margin: 17px 0 0 14px;
}

.window-title {
  flex: 1;
  margin: 10px 0 0;
  padding-right: 80px;
  font-size: 22px;
  line-height: 32px;
  font-weight: normal;
  text-align: center;
  white-space: nowrap;
  color: #1a2230;
}

.window-buttons {
  display: flex;
  height: 33px;
  margin-right: 6px;
  border: 2px solid #5c6b7e;
  border-top: none;
  border-radius: 0 0 7px 7px;
  overflow: hidden;
}

.window-buttons button {
  display: flex;
  align-items: center;
  justify-content: center;
  width: 50px;
  border-right: 2px solid #6d7c8f;
  background: linear-gradient(#d9dfe8 45%, #a9b5c4 50%, #c3cfdc);
}

.window-buttons .minimize {
  width: 52px;
  padding-top: 8px;
}

.window-buttons .close {
  width: 88px;
  border-right: none;
  background: linear-gradient(#e0a08e 40%, #c9401f 50%, #e06b45);
}

/* Tabs */
.tabs {
  display: flex;
  align-items: flex-end;
  height: 44px;
  flex: none;
  padding: 0 7px 0 91px;
  background: #bad7fd;
  border-bottom: 1px solid #8eb0dc;
}

.tab {
  height: 41px;
  padding: 0 29px;
  line-height: 41px;
  border-radius: 5px 5px 0 0;
}

.tab.active {
  padding: 0 20px;
  margin-bottom: -1px;
  border: 1px solid #9cc3ea;
  border-bottom: none;
  background: linear-gradient(#f4f8fd, #e0ebf7);
}

.help-btn {
  margin: 0 0 8px auto;
}

/* Ribbon */
.ribbon {
  display: flex;
  gap: 8px;
  height: 169px;
  flex: none;
  margin: 0 3px;
  padding: 5px 24px 4px 4px;
  border: 1px solid #8fb4dc;
  border-top: none;
  border-bottom: 3px solid #8fb2cf;
  border-radius: 0 0 7px 7px;
  background: linear-gradient(#dbe7f5, #cfe0f3 30%, #c7dcf2 60%, #d9f3fb);
}

.group {
  display: flex;
  flex-direction: column;
  flex: none;
  border: 2px solid #b0cbe6;
  border-radius: 5px;
  background: linear-gradient(#dee7f2 0, #d7e3f2 18%, #c9daee 20%, #d8e7f6 100%);
}

.group-body {
  flex: 1;
  display: flex;
}

.caption {
  position: relative;
  height: 27px;
  padding-right: 32px;
  line-height: 28px;
  text-align: center;
  color: #5675ad;
  background: #c0d8f1;
}

.editing .caption {
  padding-right: 0;
}

.launcher {
  position: absolute;
  right: 8px;
  top: 6px;
  width: 12px;
  height: 12px;
  border: 2px solid #7e93b6;
  border-right: none;
  border-bottom: none;
}

.launcher::after {
  content: "";
  position: absolute;
  right: 0;
  bottom: 0;
  border: 4px solid #5f7399;
  border-top-color: transparent;
  border-left-color: transparent;
}

.clipboard {
  width: 282px;
}

.font {
  width: 489px;
}

.paragraph {
  width: 479px;
}

.styles {
  flex: 1;
}

.editing {
  width: 138px;
}

.big-btn {
  display: flex;
  flex-direction: column;
  align-items: center;
  line-height: 24px;
}

.paste {
  width: 70px;
  margin: 6px 12px 0 8px;
}

.paste svg {
  margin-bottom: 10px;
}

.paste .caret {
  margin-top: 6px;
}

.stack {
  display: flex;
  flex-direction: column;
  padding-top: 1px;
}

.stack button {
  display: flex;
  align-items: center;
  gap: 7px;
  height: 41px;
  white-space: pre;
}

/* Font and paragraph tools */
.rows {
  flex-direction: column;
  gap: 15px;
  padding: 16px 4px 0;
}

.row {
  display: flex;
  gap: 6px;
}

.combos {
  display: flex;
  gap: 1px;
}

.combo {
  position: relative;
}

.combo .caret {
  position: absolute;
  right: 8px;
  top: 17px;
}

.combo select {
  appearance: none;
  display: block;
  height: 40px;
  padding: 0 4px;
  border: 1px solid #abc1de;
  background: #f1f6fd;
  color: #111;
}

.font-name {
  width: 252px;
}

.font-size {
  width: 80px;
}

.tools {
  display: flex;
  border: 1px solid #92abce;
  border-radius: 4px;
  background: linear-gradient(#d5e2f2 45%, #c0d3ec 50%, #d3e3f6);
}

.tools button {
  display: flex;
  align-items: center;
  justify-content: center;
  gap: 8px;
  height: 38px;
  border-right: 1px solid #b7cbe5;
}

.tools button:last-child {
  border-right: none;
}

.tools .on,
.views .on {
  background: linear-gradient(#f8cd94, #f7b04f 50%, #fde08a);
}

.w40 {
  width: 41px;
}

.w42 {
  width: 42px;
}

.w56 {
  width: 57px;
}

.w60 {
  width: 61px;
}

.w62 {
  width: 64px;
}

.w70 {
  width: 70px;
}

.tools .w56 {
  gap: 3px;
}

.bold,
.italic,
.underline,
.case {
  font-family: "Liberation Serif", serif;
  font-weight: bold;
  font-size: 26px;
  color: #20262f;
}

.italic {
  font-style: italic;
}

.tools .case {
  font-size: 24px;
}

.strike {
  font-family: "Liberation Serif", serif;
  font-size: 22px;
  font-weight: bold;
  color: #2f3640;
}

.tools .script {
  gap: 0;
  font-weight: bold;
  font-size: 26px;
  line-height: 28px;
  color: #20262f;
}

.script sub,
.script sup {
  font-size: 12px;
  line-height: 20px;
  color: #3f5ca8;
}

.script sub {
  align-self: flex-end;
}

.script sup {
  align-self: flex-start;
}

/* Style gallery */
.gallery {
  display: flex;
  flex: 1;
  height: 111px;
  margin: 8px 0 0 4px;
  border: 1px solid #b5cde8;
  background: #d3e3f5;
}

.cards {
  flex: 1;
  display: flex;
  gap: 14px;
  padding: 9px 0 0 8px;
}

.card {
  width: 121px;
  height: 91px;
  padding: 5px 6px 0;
  background: #fff;
  color: #23286b;
}

.card.selected {
  box-shadow: 0 0 0 5px #f7c465, 0 0 0 7px #b9893f;
}

.sample,
.name {
  display: block;
  overflow: hidden;
  white-space: nowrap;
}

.sample {
  height: 50px;
  line-height: 50px;
  font-family: Lato, sans-serif;
  font-size: 24px;
  text-align: left;
  color: #222;
}

.heading {
  font-family: "Liberation Serif", serif;
  font-size: 36px;
  font-weight: bold;
  color: #000;
}

.slanted {
  font-style: italic;
}

.subtitle {
  font-family: "Liberation Serif", serif;
  font-size: 28px;
}

.name {
  line-height: 34px;
  margin: 0 -6px;
}

.gallery-scroll {
  display: flex;
  flex-direction: column;
  width: 25px;
  gap: 2px;
}

.gallery-scroll button {
  flex: 1;
  display: flex;
  flex-direction: column;
  align-items: center;
  justify-content: center;
  gap: 4px;
  border: 1px solid #a9c2e0;
  background: #cfe0f5;
}

.gallery-scroll .off {
  background: #ebedf0;
}

.change-styles {
  width: 94px;
  margin-top: 8px;
}

.change-styles svg {
  margin-bottom: 10px;
}

.change-styles .caret {
  vertical-align: middle;
}

.editing .stack {
  padding-left: 10px;
}

/* Document */
.workspace {
  position: relative;
  flex: 1;
  min-height: 0;
  display: flex;
  overflow: hidden;
  background: linear-gradient(#a5c1f0 0, #94b7e6 10%, #86abd9 22%, #7a9fd4 32%, #6d95c9 44%, #5f88c0 54%, #5580b9 70%, #5681bd 82%, #6092d4 100%);
}

.swoosh {
  position: absolute;
  left: 0;
  top: 0;
}

.pages {
  position: relative;
  flex: 1;
  display: flex;
  flex-direction: column;
  align-items: center;
  gap: 26px;
  padding: 12px 0 0 4px;
}

.page {
  position: relative;
  flex: none;
  width: 1533px;
  padding: 91px 100px 181px 181px;
  background: #fff;
  border: 1px solid #5a6f94;
  box-shadow: 3px 4px 6px rgba(40, 60, 100, 0.6);
}

.page.first {
  padding-top: 40px;
  padding-bottom: 179px;
  border-top: none;
}

.page p {
  margin: 0 0 37px;
  font-family: "Liberation Serif", "Times New Roman", serif;
  font-size: 55px;
  line-height: 62px;
  color: #c00f05;
  white-space: nowrap;
}

.page u {
  text-decoration-thickness: 3px;
  text-underline-offset: 5px;
  text-decoration-skip-ink: none;
}

mark {
  color: #7c2f55;
  background: #a5c8ef;
}

.page-header {
  display: flex;
  justify-content: space-between;
  margin: 0 126px 50px 0;
  font-family: Lato, sans-serif;
  font-size: 28px;
  line-height: 40px;
  color: #8a8a8a;
}

.ibeam {
  position: absolute;
  left: 1071px;
  top: 132px;
}

/* Scrollbar */
.scrollbar {
  position: relative;
  display: flex;
  flex-direction: column;
  align-items: center;
  width: 31px;
  padding: 7px 3px 3px 0;
  border-left: 2px solid #a6c2ef;
  background: #aac7f5;
}

.split {
  width: 18px;
  height: 3px;
  background: #24406f;
}

.ruler {
  margin: 9px 0;
}

.hand {
  margin-bottom: 5px;
}

.track {
  flex: 1;
  display: flex;
  flex-direction: column;
  align-items: center;
  align-self: stretch;
  padding: 12px 0 10px;
  background: linear-gradient(to right, #6889b8, #7d9fca);
}

.caret.wide {
  border-width: 8px;
  border-top: 10px solid #3f5f95;
  border-bottom: none;
}

.caret.up.wide {
  border-top: none;
  border-bottom: 8px solid #3f5f95;
}

.thumb {
  flex: none;
  width: 26px;
  height: 160px;
  margin: 226px 0 auto;
  border: 2px solid #6d86ab;
  border-radius: 2px;
  background: linear-gradient(#7f8da5, #7f8da5) 60% 70px / 14px 2px no-repeat,
    linear-gradient(#7f8da5, #7f8da5) 60% 75px / 14px 2px no-repeat,
    linear-gradient(#7f8da5, #7f8da5) 60% 80px / 14px 2px no-repeat,
    linear-gradient(to right, #f2f5fa 45%, #bccbdc 55%, #d3e0ee);
}

.browse {
  display: flex;
  align-items: center;
  height: 31px;
}

/* Status bar */
.statusbar {
  display: flex;
  height: 44px;
  flex: none;
  border-top: 2px solid #5d7399;
  border-bottom: 3px solid #4f6484;
  background: linear-gradient(#d8e8fb, #c9ddf8 30%, #b4cef5 45%, #cfe1fa 75%, #d3e4fb);
}

.status-item {
  padding: 0 15px;
  border-right: 2px solid #a3bde0;
  font-size: 21px;
  color: #27406f;
}

.status-item + .status-item {
  padding: 0 16px;
}

.statusbar .status-item.proof {
  padding: 0 14px;
  border-right: none;
}

.status-right {
  display: flex;
  align-items: center;
  margin-left: auto;
  padding: 0 9px 0 12px;
  border-left: 2px solid #eaf3fd;
  background: linear-gradient(#a9c9f5, #8fb3e8 45%, #7397d4 60%, #8fb4ec);
}

.views {
  display: flex;
  border: 1px solid #7f9bc8;
  background: #c8dbf6;
}

.views button {
  display: flex;
  align-items: center;
  justify-content: center;
  width: 34px;
  height: 32px;
  border-right: 1px solid #a9c1e4;
}

.zoom-level {
  margin: 0 16px;
}

.zoom-slider {
  appearance: none;
  width: 190px;
  height: 30px;
  margin: 0;
  background: linear-gradient(#dce9fb, #dce9fb) center / 100% 2px no-repeat;
}

.zoom-slider::-webkit-slider-thumb {
  appearance: none;
  width: 18px;
  height: 24px;
  background: linear-gradient(to right, #eef4fc 45%, #6a83ae 45%, #6a83ae 55%, #eef4fc 55%);
  border: 2px solid #4f6896;
  border-radius: 2px 2px 9px 9px;
}

/* Taskbar */
.taskbar {
  display: flex;
  align-items: flex-start;
  height: 73px;
  flex: none;
  border-top: 2px solid #b9cde3;
  background: linear-gradient(to right, #8298b2 0, #8aa1bb 5%, #a9c6e4 11%, #b0cfec 20%, #adcbe8 45%, #a4c6e8 60%, #9dbddb 63%, #8aa2bc 67%, #8298b3 75%, #8ba2bc 92%, #8298b2 100%);
}

.start {
  margin: 0 27px 0 15px;
}

.apps {
  display: flex;
  gap: 6px;
}

.app {
  display: flex;
  align-items: center;
  justify-content: center;
  width: 110px;
  height: 71px;
  padding-bottom: 4px;
  border: 2px solid transparent;
  border-radius: 5px;
}

.app.open {
  border-color: #4a5a72;
  background: linear-gradient(135deg, #cfdeef, #b3cbe6 60%, #bdd4ee);
  box-shadow: inset 0 0 0 2px rgba(240, 247, 255, 0.75);
}

.app.current {
  background: linear-gradient(135deg, #dfe9f5, #ecf3fb);
}

.tray {
  display: flex;
  align-items: stretch;
  height: 71px;
  margin-left: auto;
  color: #fff;
}

.lang {
  margin-right: 23px;
  line-height: 60px;
}

.tray-icons {
  display: flex;
  align-items: center;
  margin: 0;
  padding: 0;
  list-style: none;
}

.tray-icons li {
  display: flex;
  justify-content: center;
  width: 45px;
}

.clock {
  display: flex;
  flex-direction: column;
  justify-content: center;
  align-items: center;
  width: 140px;
  font-size: 21px;
  line-height: 32px;
}

.show-desktop {
  width: 43px;
  border: 2px solid #b5c4d6;
  background: linear-gradient(#a5b5c8, #7e92ac 60%, #93a6bd);
}
```
